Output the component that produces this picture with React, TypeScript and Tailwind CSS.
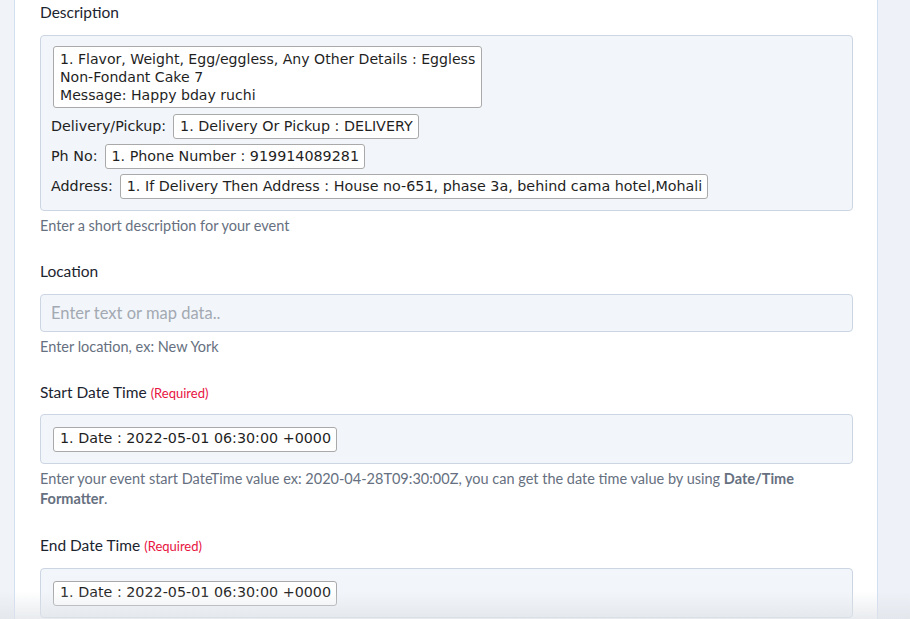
import React from 'react';

const sans = { fontFamily: 'Lato, "Open Sans", sans-serif' };
const verdana = { fontFamily: '"DejaVu Sans", Verdana, sans-serif' };

function Chip({ children }: { children: React.ReactNode }) {
  return (
    <span
      className="inline-flex h-[25px] items-center rounded-[3px] border border-[#a9a9a9] bg-white pl-[6px] pr-[5px] text-[14.3px] text-[#1f1f1f] whitespace-nowrap"
      style={verdana}
    >
      {children}
    </span>
  );
}

function Label({ text, required }: { text: string; required?: boolean }) {
  return (
    <div className="text-[15.5px] leading-[20px] text-[#1c2430]">
      {text}
      {required && <span className="ml-1 text-[13px] text-[#e8133f]">(Required)</span>}
    </div>
  );
}

function Help({ children }: { children: React.ReactNode }) {
  return <div className="text-[14.5px] leading-[20px] text-[#667080]">{children}</div>;
}

function Row({ label, value }: { label: string; value: string }) {
  return (
    <div className="-ml-[2px] flex items-center gap-[7px]">
      <span className="text-[14.3px] text-[#222]" style={verdana}>
        {label}
      </span>
      <Chip>{value}</Chip>
    </div>
  );
}

export default function App() {
  return (
    <div className="relative flex h-[619px] w-[910px] overflow-hidden bg-[#eef2f8]" style={sans}>
      <div className="w-[14px] shrink-0 bg-[#f0f4f9]" />
      <div className="w-[864px] shrink-0 border-x border-[#d3def3] bg-white pl-[25px] pr-[24px]">
        <div className="pt-[2px]">
          <Label text="Description" />
        </div>

        <div className="mt-[13px] rounded-[4px] border border-[#ccd6e2] bg-[#f2f6fa] px-[12px] pb-[11px] pt-[10px]">
          <div
            className="w-[429px] whitespace-nowrap rounded-[3px] border border-[#a9a9a9] bg-white px-[6px] py-[3px] text-[14.1px] leading-[18px] text-[#1f1f1f]"
            style={verdana}
          >
            1. Flavor, Weight, Egg/eggless, Any Other Details : Eggless
            <br />
            Non-Fondant Cake 7
            <br />
            Message: Happy bday ruchi
          </div>
          <div className="mt-[6px] flex flex-col gap-[5px]">
            <Row label="Delivery/Pickup:" value="1. Delivery Or Pickup : DELIVERY" />
            <Row label="Ph No:" value="1. Phone Number : 919914089281" />
            <Row
              label="Address:"
              value="1. If Delivery Then Address : House no-651, phase 3a, behind cama hotel,Mohali"
            />
          </div>
        </div>
        <div className="mt-[5px]">
          <Help>Enter a short description for your event</Help>
        </div>

        <div className="mt-[25px]">
          <Label text="Location" />
        </div>
        <div className="mt-[13px] flex h-[38px] items-center rounded-[4px] border border-[#ccd6e2] bg-[#f2f6fa] px-[10px] text-[16.5px] text-[#a3a9b2]">
          Enter text or map data..
        </div>
        <div className="mt-[5px]">
          <Help>Enter location, ex: New York</Help>
        </div>

        <div className="mt-[25px]">
          <Label text="Start Date Time" required />
        </div>
        <div className="mt-[11px] flex h-[50px] items-center rounded-[4px] border border-[#ccd6e2] bg-[#f2f6fa] px-[12px]">
          <Chip>1. Date : 2022-05-01 06:30:00 +0000</Chip>
        </div>
        <div className="mt-[5px]">
          <Help>
            Enter your event start DateTime value ex: 2020-04-28T09:30:00Z, you can get the date time value by using{' '}
            <b className="font-bold">Date/Time Formatter</b>.
          </Help>
        </div>

        <div className="mt-[26px]">
          <Label text="End Date Time" required />
        </div>
        <div className="mt-[12px] flex h-[50px] items-center rounded-[4px] border border-[#ccd6e2] bg-[#f2f6fa] px-[12px]">
          <Chip>1. Date : 2022-05-01 06:30:00 +0000</Chip>
        </div>
      </div>
      <div className="flex-1 bg-[#eef2f8]" />
      <div className="pointer-events-none absolute bottom-0 left-0 h-[28px] w-full bg-gradient-to-b from-transparent to-[#dfe3e8]/70" />
    </div>
  );
}
